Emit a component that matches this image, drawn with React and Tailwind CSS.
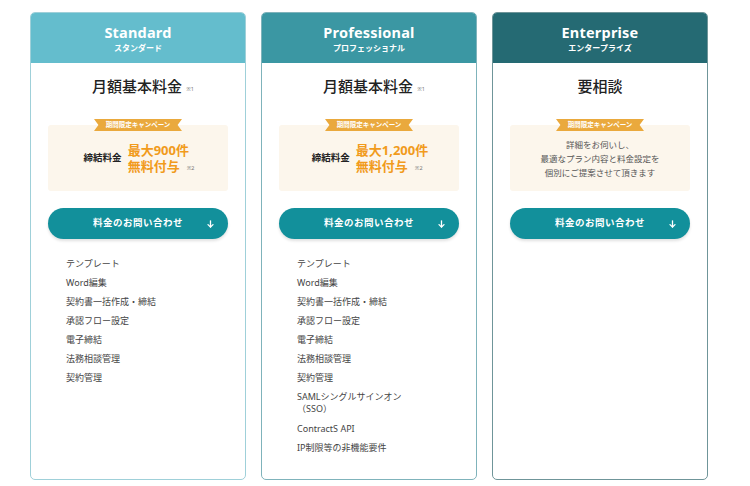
import React from "react";

const font = { fontFamily: '"Noto Sans", "Noto Sans CJK JP", sans-serif' };

function Ribbon() {
  return (
    <div className="absolute left-1/2 top-[-6px] -translate-x-1/2 h-[12px] w-[88px] bg-[#eaa93d] text-white text-[6.5px] font-bold flex items-center justify-center leading-none [clip-path:polygon(0_0,100%_0,95%_50%,100%_100%,0_100%,5%_50%)]">
      期間限定キャンペーン
    </div>
  );
}

function Button() {
  return (
    <div className="mx-[17px] mt-[17px] h-[31px] rounded-full bg-[#12909b] text-white flex items-center relative shadow-[0_2px_3px_rgba(0,0,0,0.12)]">
      <span className="flex-1 text-center text-[9.5px] font-bold tracking-[0.5px]">料金のお問い合わせ</span>
      <span className="absolute right-[14px] top-1/2 -translate-y-1/2">
        <svg width="7" height="8" viewBox="0 0 7 8" fill="none" stroke="white" strokeWidth="1.3" strokeLinecap="round" strokeLinejoin="round">
          <path d="M3.5 0.8V7" />
          <path d="M1 4.6L3.5 7L6 4.6" />
        </svg>
      </span>
    </div>
  );
}

function Card({ title, sub, headerBg, border, heading, note, children, features }) {
  return (
    <div className={`w-[216px] h-[468px] rounded-[5px] border ${border} bg-white flex flex-col overflow-hidden`}>
      <div className={`h-[50px] ${headerBg} flex flex-col items-center justify-center text-white`}>
        <div className="text-[14.5px] font-bold leading-[18px] tracking-[0.2px]">{title}</div>
        <div className="text-[8px] font-bold leading-[11px] mt-[1px]">{sub}</div>
      </div>
      <div className="pt-[11px] flex items-end justify-center leading-[24px]">
        <span className={`text-[15px] font-medium text-[#222] ${note ? "ml-[10px]" : ""}`}>{heading}</span>
        {note && <span className="text-[5.5px] text-[#777] ml-[4px] mb-[6px] leading-none">※1</span>}
      </div>
      <div className="relative mx-[17px] mt-[27px] h-[66px] bg-[#fcf6ec] rounded-[3px]">
        <Ribbon />
        {children}
      </div>
      <Button />
      <ul className="pl-[35px] mt-[19px] flex flex-col gap-[7px] text-[9px] leading-[12px] text-[#444]">
        {features.map((f, i) => (
          <li key={i}>{f}</li>
        ))}
      </ul>
    </div>
  );
}

function Offer({ amount }) {
  return (
    <div className="h-full flex items-center justify-center pl-[2px]">
      <span className="text-[9.5px] font-bold text-[#222] mr-[6px]">締結料金</span>
      <div className="text-[13px] font-bold text-[#f19b1c] leading-[16px]">
        <div>{amount}</div>
        <div className="flex items-end">
          <span>無料付与</span>
          <span className="ml-[7px] mb-[3px] text-[5.5px] font-normal text-[#777] leading-none">※2</span>
        </div>
      </div>
    </div>
  );
}

const base = ["テンプレート", "Word編集", "契約書一括作成・締結", "承認フロー設定", "電子締結", "法務相談管理", "契約管理"];

export default function App() {
  return (
    <div style={font} className="w-[750px] h-[486px] bg-white flex gap-[15px] pl-[30px] pt-[12px]">
      <Card
        title="Standard"
        sub="スタンダード"
        headerBg="bg-[#64bdcd]"
        border="border-[#9fd0d9]"
        heading="月額基本料金"
        note
        features={base}
      >
        <Offer amount="最大900件" />
      </Card>
      <Card
        title="Professional"
        sub="プロフェッショナル"
        headerBg="bg-[#3b97a3]"
        border="border-[#7fb3bb]"
        heading="月額基本料金"
        note
        features={[
          ...base,
          <span key="s" className="block pb-[1px]">SAMLシングルサインオン<br />（SSO）</span>,
          "ContractS API",
          "IP制限等の非機能要件",
        ]}
      >
        <Offer amount="最大1,200件" />
      </Card>
      <Card
        title="Enterprise"
        sub="エンタープライズ"
        headerBg="bg-[#256a73]"
        border="border-[#6f9599]"
        heading="要相談"
        features={[]}
      >
        <div className="h-full flex flex-col items-center justify-center text-[8.5px] leading-[14px] text-[#555] pt-[1px]">
          <div>詳細をお伺いし、</div>
          <div>最適なプラン内容と料金設定を</div>
          <div>個別にご提案させて頂きます</div>
        </div>
      </Card>
    </div>
  );
}
